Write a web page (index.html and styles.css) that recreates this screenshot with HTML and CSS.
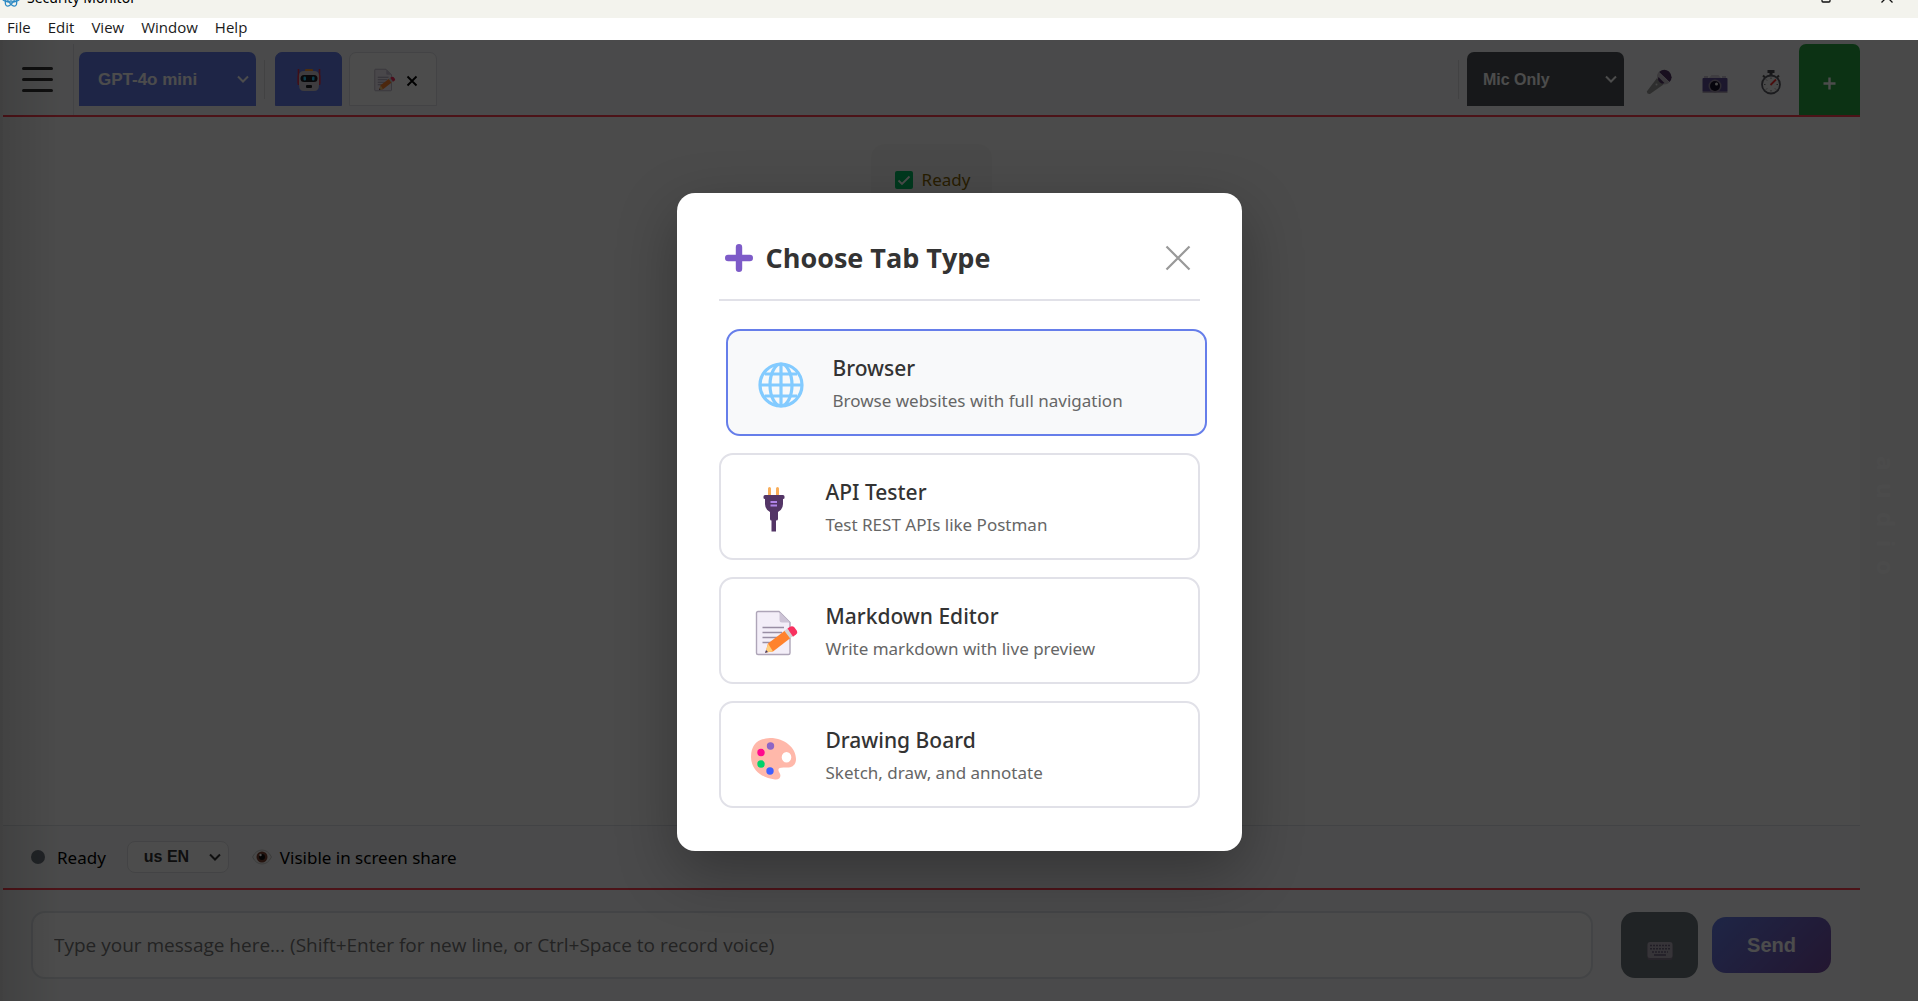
FILE: index.html
```html
<!DOCTYPE html>
<html lang="en">
<head>
  <meta charset="UTF-8" />
  <meta name="viewport" content="width=device-width, initial-scale=1.0"/>
  <title>Security Monitor</title>
  <link rel="stylesheet" href="styles.css">
</head>
<body>
  <!-- shared icons -->
  <svg width="0" height="0" class="sprite" aria-hidden="true">
    <symbol id="chevron" viewBox="0 0 12 8">
      <path d="M1 1.5 L6 6.5 L11 1.5" fill="none" stroke="currentColor" stroke-width="2"/>
    </symbol>
    <symbol id="memo" viewBox="0 0 48 46">
      <path d="M7 1.5 H28 L39 12.5 V43 Q39 44.5 37.5 44.5 H7 Q5.5 44.5 5.5 43 V3 Q5.5 1.5 7 1.5 Z" fill="#f3eef8" stroke="#aea5b8" stroke-width="1.4"/>
      <path d="M28.5 2 V10 Q28.5 12.5 31 12.5 H39 Z" fill="#cdc4d6"/>
      <path d="M11.5 17.5 H33 M11.5 22.5 H31 M11.5 27.5 H27 M11.5 32.5 H22" stroke="#998ea4" stroke-width="1.6"/>
      <path d="M14.5 42.5 L17 33.5 L34 20.5 L39.5 28 L22 41.5 Z" fill="#ff822d"/>
      <path d="M14.5 42.5 L17 33.5 L22 41.5 Z" fill="#ffce7c"/>
      <path d="M14 43 L15 40 L17 42 Z" fill="#433b6b"/>
      <path d="M33.5 21 L36.5 18.5 L42 26 L39 28.3 Z" fill="#d3d3d3"/>
      <path d="M36.5 18.5 L39 16.8 Q41.5 15.5 43.5 17.5 L46 21 Q47 23 45 24.6 L42 26.7 Z" fill="#f8315f"/>
    </symbol>
  </svg>

  <div class="window">
    <header class="titlebar">
      <svg class="app-icon" width="20" height="20" viewBox="0 0 20 20" fill="none" stroke="#2d8ac4" stroke-width="1.3">
        <ellipse cx="10" cy="10" rx="9" ry="4"/>
        <ellipse cx="10" cy="10" rx="9" ry="4" transform="rotate(60 10 10)"/>
        <ellipse cx="10" cy="10" rx="9" ry="4" transform="rotate(120 10 10)"/>
        <circle cx="10" cy="10" r="2"/>
      </svg>
      <span class="app-title">Security Monitor</span>
      <div class="window-buttons">
        <svg width="12" height="12" viewBox="0 0 12 12" fill="none" stroke="#111" stroke-width="1.3">
          <rect x="1" y="3" width="8" height="8" rx="1"/>
          <path d="M3.5 1 H10 Q11 1 11 2 V9"/>
        </svg>
        <svg width="12" height="12" viewBox="0 0 12 12" stroke="#111" stroke-width="1.3">
          <path d="M0.5 0.5 L11.5 11.5 M11.5 0.5 L0.5 11.5"/>
        </svg>
      </div>
    </header>

    <nav class="menubar">
      <a href="#">File</a>
      <a href="#">Edit</a>
      <a href="#">View</a>
      <a href="#">Window</a>
      <a href="#">Help</a>
    </nav>

    <div class="app">
      <main class="main">
        <div class="toolbar">
          <button class="hamburger" aria-label="Menu"><span></span><span></span><span></span></button>
          <div class="select-box model">
            <select aria-label="Model"><option>GPT-4o mini</option></select>
            <svg width="12" height="8"><use href="#chevron"/></svg>
          </div>
          <span class="divider"></span>
          <div class="tabs">
            <button class="tab active" aria-label="Assistant">
              <svg width="24" height="24" viewBox="0 0 24 24">
                <path d="M1.5 1 V17 M22.5 1 V17" stroke="#d3344a" stroke-width="1.6"/>
                <rect x="0.5" y="7" width="3" height="9" rx="1" fill="#e03850"/>
                <rect x="20.5" y="7" width="3" height="9" rx="1" fill="#e03850"/>
                <rect x="8" y="1" width="8" height="3" rx="1" fill="#ff9a2e"/>
                <path d="M2 8 Q2 3 7 3 H17 Q22 3 22 8 V17 Q22 23 17 23 H7 Q2 23 2 17 Z" fill="#cfc8d2"/>
                <rect x="3.5" y="7" width="17" height="7" rx="3.5" fill="#1c1c22"/>
                <rect x="6.5" y="8.5" width="2.5" height="4" rx="1" fill="#26c9fc"/>
                <rect x="15" y="8.5" width="2.5" height="4" rx="1" fill="#26c9fc"/>
                <rect x="9" y="17" width="6" height="3" rx="1" fill="#1c1c22"/>
              </svg>
            </button>
            <button class="tab" aria-label="Markdown editor">
              <svg width="24" height="24"><use href="#memo"/></svg>
              <svg class="tab-close" width="12" height="12" viewBox="0 0 12 12" stroke="#000" stroke-width="1.8">
                <path d="M1.5 1.5 L10.5 10.5 M10.5 1.5 L1.5 10.5"/>
              </svg>
            </button>
          </div>
          <div class="tools">
            <span class="divider"></span>
            <div class="select-box source">
              <select aria-label="Audio source"><option>Mic Only</option></select>
              <svg width="12" height="8"><use href="#chevron"/></svg>
            </div>
            <button class="tool" aria-label="Record voice">
              <svg width="26" height="26" viewBox="0 0 26 26">
                <path d="M11 9 L17.5 15.5 L4 25 Q1 25.5 0.8 22.5 Z" fill="#9b9b9b"/>
                <path d="M13 3 Q18 -1 23 2.5 Q28 8 23.5 13 Z" fill="#533566"/>
                <path d="M12.5 3 L23.5 13.5 Q21 16 17.5 15.5 L11 9 Q10.5 5.5 12.5 3 Z" fill="#c9c4cc"/>
                <path d="M12.5 8 L18.5 14 Q16 15.5 14 13.5 Q11 11 12.5 8 Z" fill="#533566"/>
                <circle cx="10.5" cy="15.5" r="1" fill="#e6e6e6"/>
              </svg>
            </button>
            <button class="tool" aria-label="Screenshot">
              <svg width="26" height="26" viewBox="0 0 26 26">
                <path d="M2 7 H6 V9 H2 Z M20 7 H24 V9 H20 Z" fill="#cac2d2"/>
                <path d="M7 9 L9.5 6 H16.5 L19 9 Z" fill="#d6d0dc"/>
                <rect x="0.5" y="9" width="25" height="14" rx="1" fill="#5e4f96"/>
                <path d="M0.5 22.5 H25.5 V24 H0.5 Z" fill="#b4acbc"/>
                <circle cx="13" cy="17" r="6.5" fill="#998ea4"/>
                <circle cx="13" cy="17" r="5" fill="#17122a"/>
                <circle cx="14.5" cy="15" r="1.5" fill="#f4f4f4"/>
              </svg>
            </button>
            <button class="tool" aria-label="Timer">
              <svg width="26" height="26" viewBox="0 0 26 26">
                <path d="M9.5 1 H16.5 V4 H14.5 V6 H11.5 V4 H9.5 Z" fill="#4b4b52"/>
                <path d="M5 6.5 L7 8.5 M21 6.5 L19 8.5" stroke="#555" stroke-width="2"/>
                <circle cx="13" cy="15.5" r="9" fill="#f4f4f4" stroke="#5c5c64" stroke-width="1.8"/>
                <path d="M13 8.5 V10 M13 21 V22.5 M6 15.5 H7.5 M18.5 15.5 H20 M8 10.5 L9 11.5 M8 20.5 L9 19.5 M18 20.5 L17 19.5" stroke="#777" stroke-width="1"/>
                <path d="M12.5 16 L18 10.5" stroke="#f8312f" stroke-width="1.8"/>
              </svg>
            </button>
            <button class="add-tab" aria-label="Add tab">
              <svg width="13" height="13" viewBox="0 0 13 13" stroke="#fff" stroke-width="2.4">
                <path d="M6.5 0.5 V12.5 M0.5 6.5 H12.5"/>
              </svg>
            </button>
          </div>
        </div>

        <div class="messages">
          <div class="message">
            <svg width="18" height="18" viewBox="0 0 18 18">
              <rect width="18" height="18" rx="2" fill="#00c065"/>
              <path d="M3.5 9.5 L7 13 L14.5 5.5" fill="none" stroke="#fff" stroke-width="1.8"/>
            </svg>
            <span>Ready</span>
          </div>
        </div>

        <div class="statusbar">
          <span class="dot"></span>
          <span class="status">Ready</span>
          <div class="select-box lang">
            <select aria-label="Language"><option>us EN</option></select>
            <svg width="12" height="8"><use href="#chevron"/></svg>
          </div>
          <svg class="eye" width="20" height="16" viewBox="0 0 20 16">
            <path d="M0.5 8 Q4 1 10 1 Q16 1 19.5 8 Q16 15 10 15 Q4 15 0.5 8 Z" fill="#f4f4f4" stroke="#bbb" stroke-width="0.8"/>
            <circle cx="10" cy="8" r="5.5" fill="#7d4533"/>
            <circle cx="10" cy="8" r="3" fill="#111"/>
            <circle cx="8.5" cy="6" r="1.2" fill="#fff"/>
          </svg>
          <span>Visible in screen share</span>
        </div>

        <div class="composer">
          <input type="text" aria-label="Message" placeholder="Type your message here... (Shift+Enter for new line, or Ctrl+Space to record voice)">
          <button class="keyboard" aria-label="Keyboard">
            <svg width="26" height="18" viewBox="0 0 26 18">
              <rect x="0.5" y="2" width="25" height="16" rx="2.5" fill="#837a8c"/>
              <rect x="0.5" y="0" width="25" height="16" rx="2.5" fill="#b5adbc"/>
              <path d="M3 3.5 H23 M3 6.8 H23 M5 10 H21" stroke="#6f6680" stroke-width="1.6" stroke-dasharray="2 1"/>
              <path d="M7 13 H19" stroke="#6f6680" stroke-width="1.6"/>
            </svg>
          </button>
          <button class="send">Send</button>
        </div>
      </main>

      <aside class="side">
        <span>a</span><span>u</span><span>d</span><span>i</span><span>o</span>
      </aside>

      <div class="overlay">
        <section class="modal" role="dialog" aria-labelledby="modalTitle">
          <div class="modal-header">
            <svg class="plus" width="28" height="28" viewBox="0 0 28 28" stroke="#7d5bc8" stroke-width="6.4" stroke-linecap="round">
              <path d="M14 3.2 V24.8 M3.2 14 H24.8"/>
            </svg>
            <h2 id="modalTitle">Choose Tab Type</h2>
            <button class="close" aria-label="Close">
              <svg width="26" height="26" viewBox="0 0 26 26" stroke="#999" stroke-width="2.2">
                <path d="M1.5 1.5 L24.5 24.5 M24.5 1.5 L1.5 24.5"/>
              </svg>
            </button>
          </div>

          <div class="options">
            <button class="option hovered">
              <svg width="46" height="46" viewBox="0 0 46 46" fill="none" stroke="#83cbff" stroke-width="3.2">
                <circle cx="23" cy="23" r="21"/>
                <ellipse cx="23" cy="23" rx="11" ry="21"/>
                <path d="M23 2 V44 M2 23 H44 M7 12 H39 M7 34 H39"/>
              </svg>
              <span class="option-text">
                <strong>Browser</strong>
                <span>Browse websites with full navigation</span>
              </span>
            </button>
            <button class="option">
              <svg width="46" height="46" viewBox="0 0 46 46">
                <path d="M18.5 2.5 V10 M26.5 2.5 V10" stroke="#f9ae5a" stroke-width="3" stroke-linecap="round"/>
                <path d="M14 9 H32 Q33.5 9 33.5 10.5 V12 Q33.5 13 32 13 V18 Q32 23.5 27 26 V33 Q27 34.5 25 34.5 V45.5 H20.5 V34.5 Q19 34.5 19 33 V26 Q14 23.5 14 18 V13 Q12.5 13 12.5 12 V10.5 Q12.5 9 14 9 Z" fill="#533566"/>
                <path d="M19.5 16 H26 M19.5 19.5 H26" stroke="#b083e8" stroke-width="2"/>
              </svg>
              <span class="option-text">
                <strong>API Tester</strong>
                <span>Test REST APIs like Postman</span>
              </span>
            </button>
            <button class="option">
              <svg width="46" height="46" viewBox="0 0 46 46" class="memo"><use href="#memo" width="48" height="46"/></svg>
              <span class="option-text">
                <strong>Markdown Editor</strong>
                <span>Write markdown with live preview</span>
              </span>
            </button>
            <button class="option">
              <svg width="46" height="46" viewBox="0 0 46 46">
                <path fill-rule="evenodd" d="M0 23 Q0 5 19 4 C34 4 45 14 45 25 C45 31 41 34 35 33.5 C29 33 26 34 28 38 C31 42 29 46 24 45.5 C10 44 0 35 0 23 Z M35.5 18 A4.8 5.2 0 1 0 35.5 28.4 A4.8 5.2 0 1 0 35.5 18 Z" fill="#ffb8aa"/>
                <circle cx="19.5" cy="12" r="3.7" fill="#8d65c5"/>
                <circle cx="10" cy="18.5" r="3.7" fill="#ff0a8d"/>
                <circle cx="10" cy="30" r="3.7" fill="#00d26a"/>
                <circle cx="19" cy="37" r="3.7" fill="#3f5fff"/>
              </svg>
              <span class="option-text">
                <strong>Drawing Board</strong>
                <span>Sketch, draw, and annotate</span>
              </span>
            </button>
          </div>
        </section>
      </div>
    </div>
  </div>
</body>
</html>
```

FILE: styles.css
```css
* {
  box-sizing: border-box;
}

body {
  margin: 0;
  font-family: "Noto Sans", "Open Sans", sans-serif;
  font-size: 17px;
  color: #000;
  background-color: #fff;
}

button,
input,
select {
  font-family: inherit;
  margin: 0;
  border: none;
}

svg {
  display: block;
  flex-shrink: 0;
}

.sprite {
  position: absolute;
}

.window {
  display: flex;
  flex-direction: column;
  height: 100vh;
  overflow: hidden;
}

/* window chrome */
.titlebar {
  display: flex;
  align-items: flex-end;
  gap: 6px;
  height: 18px;
  padding: 0 25px 10px 1px;
  overflow: hidden;
  background-color: #f3f3ed;
  flex-shrink: 0;
}

.titlebar > * {
  flex-shrink: 0;
}

.app-title {
  font-size: 14px;
  line-height: 20px;
}

.window-buttons {
  display: flex;
  gap: 48px;
  margin: 0 0 5px auto;
}

.menubar {
  display: flex;
  align-items: flex-start;
  gap: 17px;
  height: 22px;
  padding: 0 7px;
  flex-shrink: 0;
}

.menubar a {
  font-family: "Open Sans", "Noto Sans", sans-serif;
  font-size: 15px;
  line-height: 18px;
  color: #1a1a1a;
  text-decoration: none;
}

.app {
  position: relative;
  display: flex;
  flex: 1;
  min-height: 0;
  background-color: #f5f5f5;
}

.app::before {
  content: "";
  position: absolute;
  inset: 0 auto 0 0;
  width: 60px;
  background: linear-gradient(90deg, rgba(0, 0, 0, 0.12), rgba(0, 0, 0, 0));
}

.main {
  display: flex;
  flex-direction: column;
  flex: 1;
  min-width: 0;
  margin-left: 3px;
  background-color: #f8f9fa;
}

/* toolbar */
.toolbar {
  display: flex;
  align-items: center;
  padding-top: 4px;
  border-bottom: 2px solid #ff4050;
}

.hamburger {
  display: flex;
  flex-direction: column;
  justify-content: center;
  align-items: center;
  gap: 8px;
  width: 71px;
  height: 71px;
  padding: 0 2px 0 0;
  margin-right: 5px;
  background: none;
  border-right: 1px solid #e1e1e6;
}

.hamburger span {
  width: 31px;
  height: 3px;
  border-radius: 2px;
  background-color: #333;
}

.divider {
  width: 1px;
  height: 39px;
  background-color: #dcdce0;
}

.select-box {
  position: relative;
}

.select-box select {
  width: 100%;
  height: 100%;
  font-family: "Liberation Sans", Arial, sans-serif;
  font-weight: bold;
  color: inherit;
  background: none;
  appearance: none;
}

.select-box svg {
  position: absolute;
  top: 50%;
  right: 7px;
  transform: translateY(-50%);
  pointer-events: none;
}

.model,
.source {
  height: 54px;
  margin-bottom: 2px;
  color: #fff;
  border-radius: 7px 7px 0 0;
}

.model {
  width: 177px;
  margin-right: 8px;
  background-color: #667eea;
}

.model select {
  padding: 2px 19px 0;
  font-size: 17px;
}

.source {
  width: 157px;
  margin-left: 8px;
  margin-right: 7px;
  background-color: #4d5257;
}

.source select {
  padding: 2px 16px 0;
  font-size: 16px;
}

.tabs {
  display: flex;
  gap: 7px;
  margin: 0 0 2px 10px;
}

.tab {
  display: flex;
  align-items: center;
  justify-content: center;
  gap: 10px;
  height: 54px;
  min-width: 67px;
  padding: 3px 18px 0 22px;
  border: 1px solid #dfdfe6;
  border-radius: 7px 7px 0 0;
  background-color: #fdfdfd;
}

.tab.active {
  padding: 3px 20px 0;
  border-color: #667eea;
  background-color: #667eea;
}

.tab-close {
  margin-top: 2px;
}

.tools {
  display: flex;
  align-items: center;
  margin-left: auto;
}

.tool {
  display: flex;
  align-items: center;
  justify-content: center;
  width: 56px;
  height: 54px;
  padding: 4px 0 0;
  background: none;
}

.add-tab {
  display: flex;
  align-items: center;
  justify-content: center;
  width: 61px;
  height: 71px;
  padding: 7px 0 0;
  border-radius: 7px 7px 0 0;
  background-color: #28a745;
}

/* conversation */
.messages {
  flex: 1;
  padding: 27px 28px;
  background-color: #fcfcfc;
  overflow: hidden;
}

.message {
  display: flex;
  align-items: center;
  gap: 9px;
  width: max-content;
  margin: 0 auto;
  padding: 24px 22px 24px 24px;
  border-radius: 14px;
  color: #856404;
  background-color: #f6f6f4;
}

.statusbar {
  display: flex;
  align-items: center;
  height: 63px;
  padding: 0 28px;
  border-top: 1px solid #dee2e6;
}

.dot {
  width: 14px;
  height: 14px;
  margin-right: 12px;
  border-radius: 50%;
  background-color: #6c757d;
}

.lang {
  width: 102px;
  height: 32px;
  margin: 0 23px 0 21px;
  border: 1px solid #e1e1e6;
  border-radius: 8px;
  background-color: #fff;
  color: #333;
}

.lang select {
  padding: 0 16px 2px;
  font-size: 16px;
}

.eye {
  margin-right: 8px;
}

.composer {
  display: flex;
  align-items: center;
  padding: 21px 29px 22px 28px;
  border-top: 2px solid #ff4050;
}

.composer input {
  flex: 1;
  min-width: 0;
  height: 68px;
  padding: 0 21px;
  border: 2px solid #e1e5e9;
  border-radius: 14px;
  font-family: "Open Sans", "Noto Sans", sans-serif;
  font-size: 19px;
  background-color: #fff;
}

.composer input::placeholder {
  color: #757575;
  opacity: 1;
}

.keyboard {
  display: flex;
  align-items: center;
  justify-content: center;
  width: 77px;
  height: 66px;
  margin: 0 14px 0 28px;
  padding: 12px 0 0;
  border-radius: 14px;
  background-color: #6c757d;
}

.send {
  width: 119px;
  height: 56px;
  border-radius: 14px;
  font-family: "Liberation Sans", Arial, sans-serif;
  font-size: 20px;
  font-weight: bold;
  color: #fff;
  background: linear-gradient(135deg, #667eea, #764ba2);
}

.side {
  display: flex;
  flex-direction: column;
  align-items: center;
  justify-content: center;
  gap: 13px;
  width: 58px;
  padding: 0 6px 10px 0;
  font-size: 24px;
  font-weight: bold;
  line-height: 24px;
  color: #fcfcfc;
}

.side span {
  writing-mode: vertical-rl;
}

/* tab type dialog */
.overlay {
  position: absolute;
  inset: 0;
  display: flex;
  align-items: center;
  justify-content: center;
  padding-top: 2px;
  background-color: rgba(0, 0, 0, 0.7);
}

.modal {
  width: 565px;
  max-width: 90%;
  padding: 42px 42px 43px;
  border-radius: 18px;
  background-color: #fff;
  box-shadow: 0 20px 60px rgba(0, 0, 0, 0.3);
}

.modal-header {
  display: flex;
  align-items: center;
  height: 66px;
  margin-bottom: 28px;
  padding: 0 0 18px 6px;
  border-bottom: 2px solid #e1e1e8;
}

.modal-header h2 {
  margin: 0 auto 0 13px;
  font-family: "Open Sans", "Noto Sans", sans-serif;
  font-size: 27px;
  line-height: 36px;
  color: #333;
}

.close {
  display: flex;
  align-items: center;
  justify-content: center;
  width: 44px;
  height: 44px;
  padding: 0;
  background: none;
}

.options {
  display: flex;
  flex-direction: column;
  gap: 17px;
}

.option {
  display: flex;
  align-items: center;
  gap: 29px;
  height: 107px;
  padding: 6px 30px 0;
  border: 2px solid #e1e1e8;
  border-radius: 14px;
  text-align: left;
  background-color: #fff;
}

.option.hovered {
  border-color: #667eea;
  background-color: #f8f9fa;
  transform: translateX(7px);
}

.option .memo {
  overflow: visible;
}

.option-text {
  display: flex;
  flex-direction: column;
  gap: 7px;
  margin-bottom: 3px;
  font-size: 17px;
  line-height: 24px;
  color: #666;
}

.option-text strong {
  font-size: 21px;
  font-weight: 500;
  line-height: 28px;
  color: #333;
}
```
